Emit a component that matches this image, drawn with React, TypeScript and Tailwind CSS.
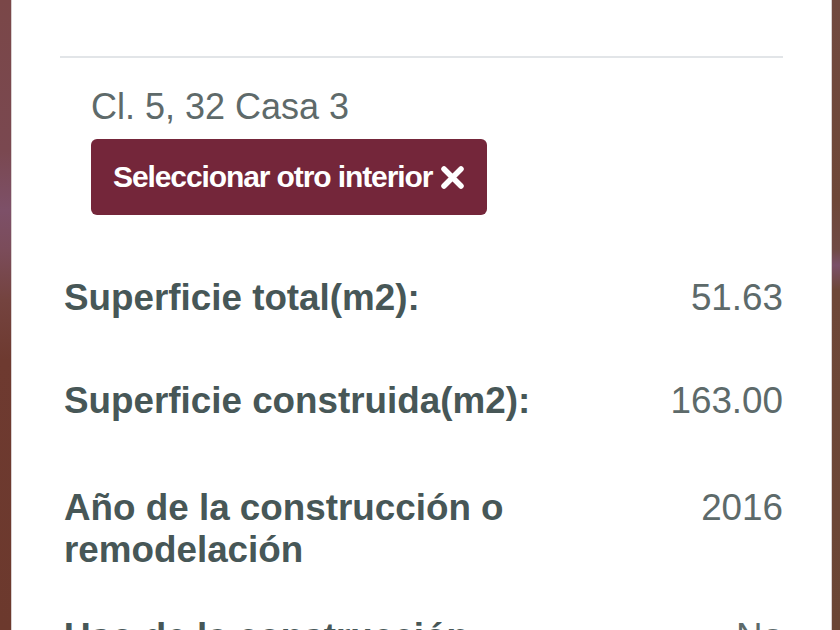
import React from "react";

function XIcon() {
  return (
    <svg width="25" height="25" viewBox="0 0 25 25" className="shrink-0">
      <path d="M4 4 L21 21 M21 4 L4 21" stroke="white" strokeWidth="5.5" strokeLinecap="round" />
    </svg>
  );
}

function Row({ label, value, mt }: { label: string; value: string; mt: string }) {
  return (
    <div className={`flex items-start justify-between pl-[4px] ${mt}`}>
      <div className="w-[510px] text-[36.8px] leading-[42px] font-bold text-[#475757]">{label}</div>
      <div className="text-[36.8px] leading-[42px] text-[#5d6a6a] text-right">{value}</div>
    </div>
  );
}

export default function App() {
  return (
    <div
      className="flex h-[630px] w-[840px] overflow-hidden"
      style={{ fontFamily: '"Liberation Sans", Arial, sans-serif' }}
    >
      <div className="w-[11px] shrink-0 bg-[linear-gradient(to_bottom,#7a4748_0px,#7a4850_150px,#7d5068_210px,#7b4c5a_250px,#74433f_300px,#6e3a30_360px,#6c392d_630px)]" />
      <div className="flex-1 bg-white border-l border-r border-[#d8cfcf] px-[48px]">
        <div className="mt-[56px] h-[2px] bg-[#e2e5e8]" />
        <div className="mt-[28px] pl-[31px] text-[36px] leading-[42px] text-[#5e6a6a]">Cl. 5, 32 Casa 3</div>
        <div className="mt-[11px] ml-[31px] flex h-[76px] w-[396px] items-center gap-[8px] rounded-[6px] bg-[#74263a] pl-[22px]">
          <span className="text-[30px] font-bold tracking-[-1.1px] text-white leading-none">Seleccionar otro interior</span>
          <XIcon />
        </div>
        <Row label="Superficie total(m2):" value="51.63" mt="mt-[62px]" />
        <Row label="Superficie construida(m2):" value="163.00" mt="mt-[61px]" />
        <Row label="Año de la construcción o remodelación" value="2016" mt="mt-[65px]" />
        <Row label="Uso de la construcción" value="No" mt="mt-[45px]" />
      </div>
      <div className="w-[8px] shrink-0 bg-[linear-gradient(to_bottom,#71493f_0px,#6e4738_200px,#704a45_250px,#7a5068_265px,#6e4738_290px,#6b4535_630px)]" />
    </div>
  );
}
